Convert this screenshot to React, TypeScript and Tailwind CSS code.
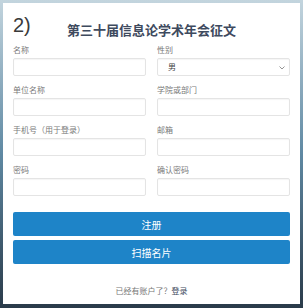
import React from 'react';

const FIELDS: { label: string; type?: string; select?: boolean }[] = [
  { label: '名称' },
  { label: '性别', select: true },
  { label: '单位名称' },
  { label: '学院或部门' },
  { label: '手机号（用于登录）' },
  { label: '邮箱', type: 'email' },
  { label: '密码', type: 'password' },
  { label: '确认密码', type: 'password' },
];

function Field({ label, type, select }: { label: string; type?: string; select?: boolean }) {
  return (
    <div className="flex flex-col">
      <label className="text-[8px] leading-[12px] text-[#7a7a7a] mb-[2px]">{label}</label>
      {select ? (
        <div className="relative h-[18px] border border-[#e4e4e4] rounded-[2px] bg-white flex items-center pl-[10px] shadow-[inset_0_1px_1px_rgba(0,0,0,0.04)]">
          <span className="text-[8px] text-[#444]">男</span>
          <svg className="absolute right-[4px] top-[7px]" width="6" height="4" viewBox="0 0 6 4">
            <path d="M0.5 0.5 L3 3 L5.5 0.5" fill="none" stroke="#888" strokeWidth="0.9" />
          </svg>
        </div>
      ) : (
        <input
          type={type || 'text'}
          className="h-[18px] w-full border border-[#e4e4e4] rounded-[2px] bg-white outline-none px-[4px] text-[8px] shadow-[inset_0_1px_1px_rgba(0,0,0,0.04)]"
        />
      )}
    </div>
  );
}

export default function App() {
  return (
    <div
      className="w-full h-[308px] pt-[3px] pl-[3px] pr-[3px] pb-[4px] bg-gradient-to-b from-[#c3d5de] via-[#5f89a3] to-[#2a3b4a]"
      style={{ fontFamily: '"Noto Sans CJK SC", "Noto Sans", sans-serif' }}
    >
      <div className="h-full bg-white px-[10px] flex flex-col">
        <div className="flex items-start">
          <span className="pt-[10px] text-[20px] leading-[24px] text-[#3a3a3a] w-[16px]" style={{ fontFamily: '"Liberation Sans", sans-serif' }}>
            2)
          </span>
          <h1 className="flex-1 text-center pt-[19px] text-[13px] leading-[16px] font-bold text-[#3e4a5e]">
            第三十届信息论学术年会征文
          </h1>
          <span className="w-[16px]" />
        </div>

        <div className="mt-[6px] grid grid-cols-2 gap-x-[11px] gap-y-[8px]">
          {FIELDS.map((f) => (
            <Field key={f.label} {...f} />
          ))}
        </div>

        <div className="mt-[16px] flex flex-col gap-[4px]">
          <button className="h-[24px] w-full bg-[#1e84c8] text-white text-[10px] rounded-[2px]">注册</button>
          <button className="h-[24px] w-full bg-[#1e84c8] text-white text-[10px] rounded-[2px]">扫描名片</button>
        </div>

        <p className="mt-[21px] text-center text-[8px] leading-[12px] text-[#777]">
          已经有账户了？<span className="text-[#3e4a5e]">登录</span>
        </p>
      </div>
    </div>
  );
}
